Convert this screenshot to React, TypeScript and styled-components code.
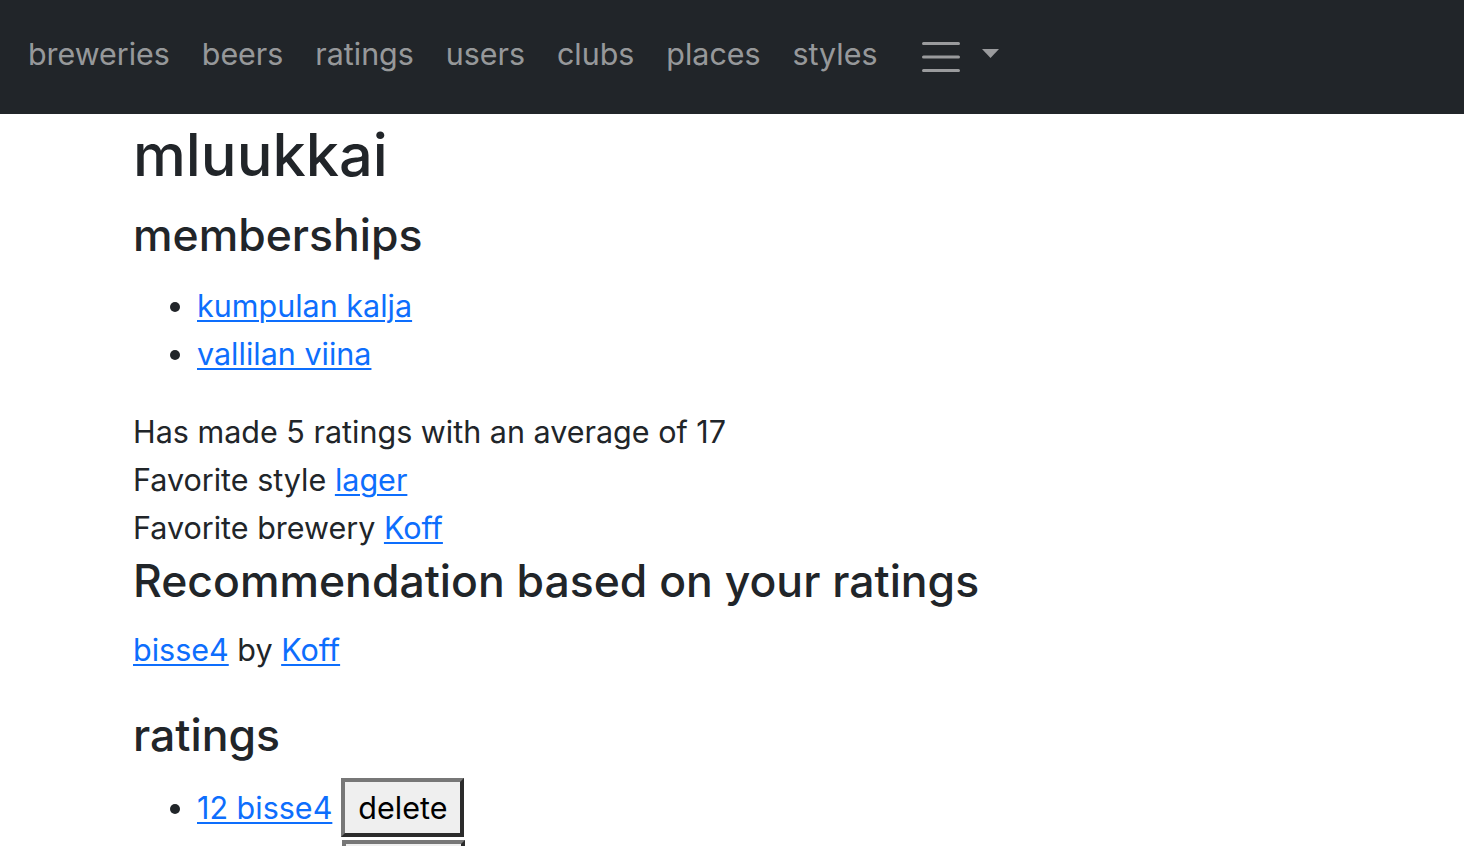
import React from "react";
import styled, { createGlobalStyle } from "styled-components";

const GlobalStyle = createGlobalStyle`
  html, body { margin: 0; padding: 0; background: #ffffff; }
  body {
    font-family: Inter, "Noto Sans", "Liberation Sans", sans-serif;
    color: #212529;
  }
`;

const NavBar = styled.nav`
  height: 114px;
  background: #212529;
  display: flex;
  align-items: center;
  padding: 0 0 6px 28px;
  box-sizing: border-box;
`;

const NavLinks = styled.div`
  display: flex;
  align-items: center;
  gap: 32px;
`;

const NavLink = styled.a`
  font-size: 30.4px;
  line-height: 48px;
  color: rgba(255, 255, 255, 0.55);
  text-decoration: none;
  cursor: pointer;
`;

const MenuToggle = styled.button`
  display: flex;
  align-items: center;
  gap: 22px;
  margin: 6px 0 0 45px;
  padding: 0;
  background: none;
  border: none;
  cursor: pointer;
`;

const Main = styled.main`
  padding-left: 133px;
`;

const Title = styled.h1`
  margin: 0;
  font-size: 59.5px;
  font-weight: 500;
  line-height: 80px;
`;

const Heading = styled.h2<{ $top: number }>`
  margin: ${(p) => p.$top}px 0 0;
  font-size: 44.5px;
  font-weight: 500;
  line-height: 58px;
`;

const List = styled.ul<{ $top: number }>`
  margin: ${(p) => p.$top}px 0 0;
  padding-left: 64px;
  font-size: 30.5px;
  line-height: 48px;
`;

const Item = styled.li``;

const Text = styled.p<{ $top: number }>`
  margin: ${(p) => p.$top}px 0 0;
  font-size: 30.5px;
  line-height: 48px;
`;

const Link = styled.a`
  color: #0d6efd;
  text-decoration: underline;
  text-decoration-thickness: 2px;
  text-underline-offset: 3px;
  cursor: pointer;
`;

const DeleteButton = styled.button`
  box-sizing: border-box;
  height: 59px;
  margin: 1.5px 0 1.5px 9px;
  padding: 0 13px;
  font-family: Inter, "Noto Sans", sans-serif;
  font-size: 30.5px;
  line-height: 51px;
  color: #000;
  background: #efefef;
  border-style: solid;
  border-width: 4px;
  border-color: #777777 #2b2b2b #2b2b2b #777777;
  vertical-align: baseline;
  cursor: pointer;
`;

const navItems = ["breweries", "beers", "ratings", "users", "clubs", "places", "styles"];

const ratings = ["12 bisse4", "10 bisse4"];

export default function App() {
  return (
    <>
      <GlobalStyle />
      <NavBar>
        <NavLinks>
          {navItems.map((n) => (
            <NavLink key={n}>{n}</NavLink>
          ))}
        </NavLinks>
        <MenuToggle aria-label="menu">
          <svg width="38" height="30" viewBox="0 0 38 30">
            <g stroke="#9a9b9d" strokeWidth="3" strokeLinecap="round">
              <line x1="1.5" y1="1.5" x2="36.5" y2="1.5" />
              <line x1="1.5" y1="15" x2="36.5" y2="15" />
              <line x1="1.5" y1="28.5" x2="36.5" y2="28.5" />
            </g>
          </svg>
          <svg width="17" height="9" viewBox="0 0 17 9" style={{ marginTop: -7 }}>
            <polygon points="0,0 17,0 8.5,9" fill="#9a9b9d" />
          </svg>
        </MenuToggle>
      </NavBar>
      <Main>
        <Title>mluukkai</Title>
        <Heading $top={12}>memberships</Heading>
        <List $top={18}>
          <Item><Link>kumpulan kalja</Link></Item>
          <Item><Link>vallilan viina</Link></Item>
        </List>
        <Text $top={30}>Has made 5 ratings with an average of 17</Text>
        <Text $top={0}>Favorite style <Link>lager</Link></Text>
        <Text $top={0}>Favorite brewery <Link>Koff</Link></Text>
        <Heading $top={0}>Recommendation based on your ratings</Heading>
        <Text $top={16}>
          <Link>bisse4</Link> by <Link>Koff</Link>
        </Text>
        <Heading $top={32}>ratings</Heading>
        <List $top={12}>
          {ratings.map((r) => (
            <Item key={r}>
              <Link>{r}</Link>
              <DeleteButton>delete</DeleteButton>
            </Item>
          ))}
        </List>
      </Main>
    </>
  );
}
